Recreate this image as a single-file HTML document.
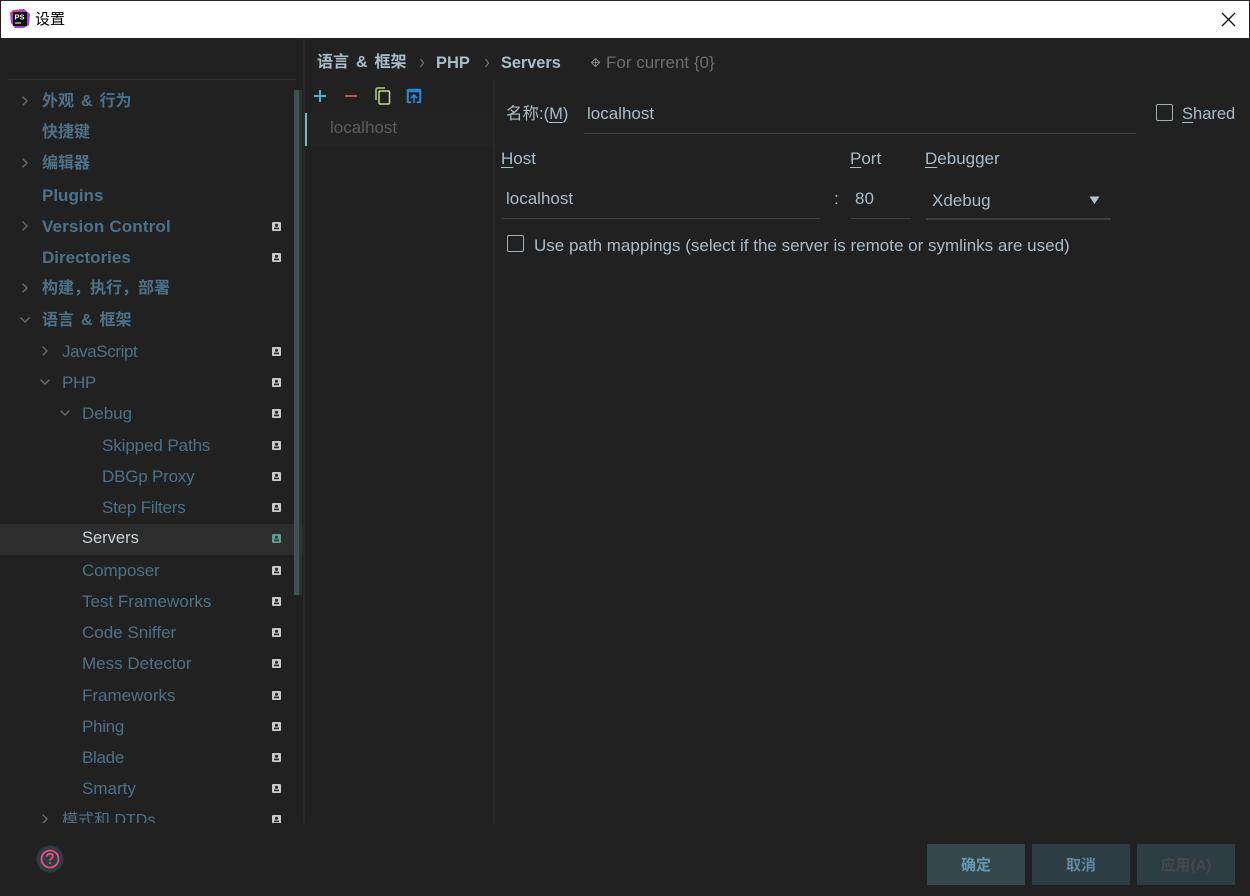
<!DOCTYPE html>
<html><head><meta charset="utf-8"><style>
html,body{margin:0;padding:0;background:#212121;}
body{width:1250px;height:896px;position:relative;overflow:hidden;font-family:"Liberation Sans","Noto Sans CJK SC",sans-serif;font-size:17px;color:#a9bdc9;}
.a{position:absolute;white-space:nowrap;line-height:24px;}
.r{position:absolute;left:0;width:300px;height:31px;line-height:31px;white-space:nowrap;color:#4d7189;}
.r span{position:absolute;top:0;}
.b{font-weight:bold;}
.c{font-size:16px;word-spacing:2.5px;}
.r svg{position:absolute;}
u{text-underline-offset:3px;}
.l{position:absolute;background:#3f3f3f;height:1px;}
.btn{position:absolute;top:844px;width:98px;height:41px;line-height:43px;text-align:center;font-size:15px;font-weight:bold;color:#5f8ba3;background:#2e3c43;}
</style></head><body>
<div style="position:absolute;left:0;top:0;width:1250px;height:1px;background:#2a2a2a"></div>
<div style="position:absolute;left:1px;top:1px;width:1248px;height:37px;background:#fff"></div>
<svg style="position:absolute;left:10px;top:9px" width="20" height="20" viewBox="0 0 20 20"><path d="M3 1L14 0L20 5L19 16L14 19L5 19L1 14L0 4Z" fill="#a63fd6"/><path d="M0 4L3 1L10 1L5 9Z" fill="#e0428c"/><rect x="3" y="3" width="14" height="14" fill="#111"/><text x="4.5" y="10.5" font-size="7.5" font-weight="bold" fill="#fff" font-family="Liberation Sans">PS</text><rect x="5" y="13.5" width="6" height="1" fill="#fff"/></svg>
<div class="a" style="left:35px;top:8px;color:#000;font-size:15px">设置</div>
<svg style="position:absolute;left:1221px;top:12px" width="15" height="15" viewBox="0 0 15 15"><path d="M1 1L14 14M14 1L1 14" stroke="#111" stroke-width="1.3" fill="none"/></svg>

<div style="position:absolute;left:8px;top:79px;width:288px;height:1px;background:#333"></div>
<div style="position:absolute;left:303px;top:38px;width:2px;height:785px;background:#282828"></div>
<div style="position:absolute;left:493px;top:80px;width:2px;height:743px;background:#282828"></div>

<div style="position:absolute;left:0;top:524px;width:303px;height:31px;background:#2d2d2d"></div>

<div style="position:absolute;left:0;top:85px;width:303px;height:738px;overflow:hidden">
<div class="r b c" style="top:0.5px"><svg style="left:20px;top:9px" width="10" height="12"><path d="M2.5 1.5L7 6L2.5 10.5" stroke="#6b6b6b" stroke-width="1.4" fill="none"/></svg><span style="left:42px">外观 &amp; 行为</span></div>
<div class="r b c" style="top:31.5px"><span style="left:42px">快捷键</span></div>
<div class="r b c" style="top:62.5px"><svg style="left:20px;top:9px" width="10" height="12"><path d="M2.5 1.5L7 6L2.5 10.5" stroke="#6b6b6b" stroke-width="1.4" fill="none"/></svg><span style="left:42px">编辑器</span></div>
<div class="r b" style="top:94.5px"><span style="left:42px">Plugins</span></div>
<div class="r b" style="top:125.5px"><svg style="left:20px;top:9px" width="10" height="12"><path d="M2.5 1.5L7 6L2.5 10.5" stroke="#6b6b6b" stroke-width="1.4" fill="none"/></svg><span style="left:42px;letter-spacing:.15px">Version Control</span><svg style="left:272px;top:11px" width="9" height="9"><use href="#p"/></svg></div>
<div class="r b" style="top:156.5px"><span style="left:42px">Directories</span><svg style="left:272px;top:11px" width="9" height="9"><use href="#p"/></svg></div>
<div class="r b c" style="top:187.5px"><svg style="left:20px;top:9px" width="10" height="12"><path d="M2.5 1.5L7 6L2.5 10.5" stroke="#6b6b6b" stroke-width="1.4" fill="none"/></svg><span style="left:42px">构建，执行，部署</span></div>
<div class="r b c" style="top:219.5px"><svg style="left:19px;top:10px" width="12" height="10"><path d="M1.5 2.5L6 7L10.5 2.5" stroke="#6b6b6b" stroke-width="1.4" fill="none"/></svg><span style="left:42px">语言 &amp; 框架</span></div>
<div class="r" style="top:250.5px"><svg style="left:40px;top:9px" width="10" height="12"><path d="M2.5 1.5L7 6L2.5 10.5" stroke="#6b6b6b" stroke-width="1.4" fill="none"/></svg><span style="left:62px;letter-spacing:-.4px">JavaScript</span><svg style="left:272px;top:11px" width="9" height="9"><use href="#p"/></svg></div>
<div class="r" style="top:281.5px"><svg style="left:39px;top:10px" width="12" height="10"><path d="M1.5 2.5L6 7L10.5 2.5" stroke="#6b6b6b" stroke-width="1.4" fill="none"/></svg><span style="left:62px;letter-spacing:-.4px">PHP</span><svg style="left:272px;top:11px" width="9" height="9"><use href="#p"/></svg></div>
<div class="r" style="top:312.5px"><svg style="left:59px;top:10px" width="12" height="10"><path d="M1.5 2.5L6 7L10.5 2.5" stroke="#6b6b6b" stroke-width="1.4" fill="none"/></svg><span style="left:82px">Debug</span><svg style="left:272px;top:11px" width="9" height="9"><use href="#p"/></svg></div>
<div class="r" style="top:344.5px"><span style="left:102px;letter-spacing:-.1px">Skipped Paths</span><svg style="left:272px;top:11px" width="9" height="9"><use href="#p"/></svg></div>
<div class="r" style="top:375.5px"><span style="left:102px;letter-spacing:-.2px">DBGp Proxy</span><svg style="left:272px;top:11px" width="9" height="9"><use href="#p"/></svg></div>
<div class="r" style="top:406.5px"><span style="left:102px;letter-spacing:-.2px">Step Filters</span><svg style="left:272px;top:11px" width="9" height="9"><use href="#p"/></svg></div>
<div class="r" style="top:437.5px;color:#c9d3d8"><span style="left:82px;font-size:16.5px">Servers</span><svg style="left:272px;top:11px" width="9" height="9"><use href="#q"/></svg></div>
<div class="r" style="top:469.5px"><span style="left:82px;letter-spacing:-.1px">Composer</span><svg style="left:272px;top:11px" width="9" height="9"><use href="#p"/></svg></div>
<div class="r" style="top:500.5px"><span style="left:82px">Test Frameworks</span><svg style="left:272px;top:11px" width="9" height="9"><use href="#p"/></svg></div>
<div class="r" style="top:531.5px"><span style="left:82px">Code Sniffer</span><svg style="left:272px;top:11px" width="9" height="9"><use href="#p"/></svg></div>
<div class="r" style="top:562.5px"><span style="left:82px">Mess Detector</span><svg style="left:272px;top:11px" width="9" height="9"><use href="#p"/></svg></div>
<div class="r" style="top:594.5px"><span style="left:82px">Frameworks</span><svg style="left:272px;top:11px" width="9" height="9"><use href="#p"/></svg></div>
<div class="r" style="top:625.5px"><span style="left:82px;letter-spacing:-.3px">Phing</span><svg style="left:272px;top:11px" width="9" height="9"><use href="#p"/></svg></div>
<div class="r" style="top:656.5px"><span style="left:82px;letter-spacing:-.3px">Blade</span><svg style="left:272px;top:11px" width="9" height="9"><use href="#p"/></svg></div>
<div class="r" style="top:687.5px"><span style="left:82px">Smarty</span><svg style="left:272px;top:11px" width="9" height="9"><use href="#p"/></svg></div>
<div class="r" style="top:718.5px"><svg style="left:40px;top:9px" width="10" height="12"><path d="M2.5 1.5L7 6L2.5 10.5" stroke="#6b6b6b" stroke-width="1.4" fill="none"/></svg><span style="left:62px;font-size:16px;top:1px">模式和 DTDs</span><svg style="left:272px;top:11px" width="9" height="9"><use href="#p"/></svg></div>
</div>
<svg width="0" height="0" style="position:absolute"><defs>
<g id="p"><rect width="9" height="9" rx="1" fill="#c9c9c9"/><circle cx="4.5" cy="3.3" r="1.6" fill="#2a2a2a"/><rect x="2" y="5.6" width="5" height="1.6" fill="#2a2a2a"/></g>
<g id="q"><rect width="9" height="9" rx="1" fill="#5f9c94"/><circle cx="4.5" cy="3.3" r="1.6" fill="#24403d"/><rect x="2" y="5.6" width="5" height="1.6" fill="#24403d"/></g>
</defs></svg>

<div style="position:absolute;left:294px;top:90px;width:5px;height:505px;background:#3c5552;border-radius:2px 2px 0 0"></div>
<div style="position:absolute;left:299px;top:90px;width:3px;height:505px;background:#2a3534"></div>

<div class="a b" style="left:317px;top:51px;color:#a9bdc9;font-size:16px;word-spacing:2.5px">语言 &amp; 框架</div>
<svg style="position:absolute;left:419px;top:58px" width="6" height="10"><path d="M1.5 1L4.5 5L1.5 9" stroke="#7a8a92" fill="none"/></svg>
<div class="a b" style="left:436px;top:51px;color:#a9bdc9;font-size:16.5px">PHP</div>
<svg style="position:absolute;left:484px;top:58px" width="6" height="10"><path d="M1.5 1L4.5 5L1.5 9" stroke="#7a8a92" fill="none"/></svg>
<div class="a b" style="left:501px;top:51px;color:#a9bdc9;font-size:16.3px">Servers</div>
<svg style="position:absolute;left:591px;top:58px" width="9" height="9" viewBox="0 0 9 9"><path d="M4.5 .5L8.5 4.5L4.5 8.5L.5 4.5Z" fill="none" stroke="#8a8a8a" stroke-width="1"/><path d="M.5 4.5H8.5M4.5 .5V8.5" stroke="#8a8a8a" stroke-width=".8"/></svg>
<div class="a" style="left:606px;top:51px;color:#6d6d6d">For current {0}</div>

<svg style="position:absolute;left:313px;top:89px" width="14" height="14"><path d="M7 1V13M1 7H13" stroke="#3fb4c8" stroke-width="2" fill="none"/></svg>
<svg style="position:absolute;left:344px;top:89px" width="14" height="14"><path d="M1 7H13" stroke="#c94f4f" stroke-width="2" fill="none"/></svg>
<svg style="position:absolute;left:375px;top:87px" width="16" height="18" viewBox="0 0 16 18"><path d="M10 1H2.5Q1 1 1 2.5V13" stroke="#b7cf84" stroke-width="1.5" fill="none"/><rect x="4" y="4" width="10.5" height="13" rx="1.2" stroke="#c3dc8c" stroke-width="1.5" fill="none"/></svg>
<svg style="position:absolute;left:406px;top:88px" width="16" height="16" viewBox="0 0 16 16"><path d="M1 4V2.5Q1 1 2.5 1H13.5Q15 1 15 2.5V13.5Q15 15 13.5 15H11V13.5H13.5V4Z M1 4V13.5Q1 15 2.5 15H5V13.5H2.5V4Z" fill="#2b86d6" stroke="#2b86d6" stroke-width=".6"/><path d="M8 15V7.5M5 10L8 7L11 10" stroke="#2b86d6" stroke-width="1.7" fill="none"/></svg>

<div style="position:absolute;left:305px;top:113px;width:188px;height:33px;background:#232323"></div>
<div style="position:absolute;left:305px;top:113px;width:2px;height:33px;background:#6dbdb5"></div>
<div class="a" style="left:330px;top:116px;color:#5e5e5e">localhost</div>

<div class="a" style="left:506px;top:102px;color:#a9bdc9;font-size:16.5px">名称:(<u>M</u>)</div>
<div class="a" style="left:587px;top:102px">localhost</div>
<div class="l" style="left:584px;top:133px;width:552px"></div>
<div style="position:absolute;left:1156px;top:104px;width:15px;height:15px;border:1.5px solid #9fb0b8;border-radius:2px"></div>
<div class="a" style="left:1182px;top:102px;font-size:16.5px"><u>S</u>hared</div>

<div class="a" style="left:501px;top:147px"><u>H</u>ost</div>
<div class="a" style="left:850px;top:147px"><u>P</u>ort</div>
<div class="a" style="left:925px;top:147px"><u>D</u>ebugger</div>

<div class="a" style="left:506px;top:187px">localhost</div>
<div class="l" style="left:502px;top:218px;width:318px"></div>
<div class="a" style="left:834px;top:187px">:</div>
<div class="a" style="left:855px;top:187px">80</div>
<div class="l" style="left:851px;top:218px;width:60px"></div>
<div class="a" style="left:932px;top:189px">Xdebug</div>
<div style="position:absolute;left:926px;top:218px;width:185px;height:2px;background:#3f3f3f"></div>
<svg style="position:absolute;left:1089px;top:196px" width="11" height="9"><path d="M.5 .5H10.5L5.5 8Z" fill="#b3c3cc"/></svg>

<div style="position:absolute;left:507px;top:235px;width:15px;height:15px;border:1.5px solid #9fb0b8;border-radius:2px"></div>
<div class="a" style="left:534px;top:234px;font-size:17px">Use path mappings (select if the server is remote or symlinks are used)</div>

<svg style="position:absolute;left:36px;top:845px" width="28" height="28" viewBox="0 0 28 28"><circle cx="14" cy="14" r="13.5" fill="#2e3c43"/><circle cx="14" cy="14" r="8.5" fill="none" stroke="#f04d72" stroke-width="1.8"/><path d="M11 11.5C11 9.7 12.3 8.8 14 8.8C15.7 8.8 17 9.8 17 11.3C17 13.2 14 13.4 14 15.6" fill="none" stroke="#f04d72" stroke-width="1.8"/><rect x="13.1" y="17.2" width="1.8" height="1.8" fill="#f04d72"/></svg>

<div class="btn" style="left:927px;background:#34484d;color:#6799b3">确定</div>
<div class="btn" style="left:1032px">取消</div>
<div class="btn" style="left:1137px;color:#44494c">应用(A)</div>
</body></html>
